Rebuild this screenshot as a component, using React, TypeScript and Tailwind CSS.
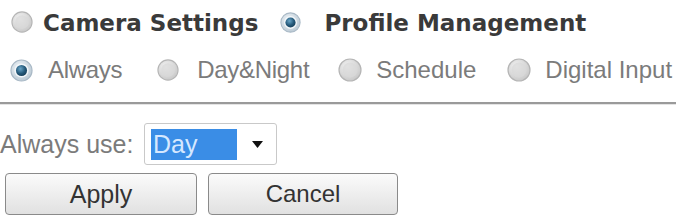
import React from "react";

function Radio({ checked, size = 22 }: { checked?: boolean; size?: number }) {
  const id = checked ? "rc" : "ru";
  return (
    <svg width={size} height={size} viewBox="0 0 24 24" className="shrink-0">
      <defs>
        <radialGradient id={id + "o"} cx="40%" cy="35%" r="70%">
          <stop offset="0%" stopColor={checked ? "#eef3f7" : "#f4f4f4"} />
          <stop offset="100%" stopColor={checked ? "#b9c8d3" : "#c6c6c6"} />
        </radialGradient>
        <radialGradient id={id + "i"} cx="40%" cy="35%" r="70%">
          <stop offset="0%" stopColor="#6aa6c8" />
          <stop offset="60%" stopColor="#24597a" />
          <stop offset="100%" stopColor="#163d57" />
        </radialGradient>
      </defs>
      <circle cx="12" cy="12" r="11" fill={`url(#${id}o)`} stroke={checked ? "#a9b9c6" : "#b5b5b5"} strokeWidth="1.2" />
      {checked ? (
        <>
          <circle cx="12" cy="12" r="7.4" fill="#f3f7fa" />
          <circle cx="12" cy="12" r="5.8" fill={`url(#${id}i)`} />
        </>
      ) : (
        <circle cx="12" cy="12" r="7.5" fill="#d9d9d9" opacity="0.7" />
      )}
    </svg>
  );
}

export default function App() {
  return (
    <div className="w-[676px] h-[217px] bg-white overflow-hidden font-['Liberation_Sans',Arial,sans-serif]">
      <div className="pt-[11px]">
        <div className="flex items-center h-[22px] pl-[11px]">
          <Radio />
          <span className="ml-[10px] font-['DejaVu_Sans',Verdana,sans-serif] font-bold text-[23px] leading-[22px] text-[#3a3a3a] pt-[2px]">
            Camera Settings
          </span>
          <span className="ml-[22px]">
            <Radio checked size={21} />
          </span>
          <span className="ml-[23px] font-['DejaVu_Sans',Verdana,sans-serif] font-bold text-[23px] leading-[22px] text-[#3a3a3a] pt-[2px]">
            Profile Management
          </span>
        </div>

        <div className="flex items-center h-[24px] mt-[25px] pl-[10px] text-[24px] leading-[24px] text-[#7b7b7b]">
          <Radio checked size={23} />
          <span className="ml-[15px] tracking-[-0.3px]">Always</span>
          <span className="ml-[35px]"><Radio size={22} /></span>
          <span className="ml-[18px] tracking-[-0.3px]">Day&amp;Night</span>
          <span className="ml-[29px]"><Radio size={24} /></span>
          <span className="ml-[14px]">Schedule</span>
          <span className="ml-[31px]"><Radio size={24} /></span>
          <span className="ml-[14px]">Digital Input</span>
        </div>

        <div className="mt-[20px] border-t-2 border-[#9a9a9a] border-b border-b-[#e4e4e4]" />

        <div className="flex items-center h-[42px] mt-[18px]">
          <span className="w-[132px] text-[25px] leading-[25px] text-[#7b7b7b] whitespace-nowrap">Always use:</span>
          <div className="ml-[12px] w-[133px] h-[42px] border border-[#c9c9c9] rounded-[3px] bg-white flex items-center pl-[6px]">
            <div className="w-[86px] h-[31px] bg-[#3a8de6] flex items-center pl-[2px]">
              <span className="text-[25px] leading-[25px] text-[#d6e8ff]">Day</span>
            </div>
            <svg width="11" height="7" viewBox="0 0 11 7" className="ml-[15px]">
              <polygon points="0,0 11,0 5.5,7" fill="#111" />
            </svg>
          </div>
        </div>

        <div className="flex items-center mt-[8px] pl-[5px] gap-[11px]">
          <button className="w-[192px] h-[42px] rounded-[4px] border border-[#8a8a8a] bg-gradient-to-b from-[#fbfbfb] to-[#e1e1e1] text-[25px] leading-[25px] text-[#333] font-['Liberation_Sans',Arial,sans-serif]">
            Apply
          </button>
          <button className="w-[190px] h-[42px] rounded-[4px] border border-[#8a8a8a] bg-gradient-to-b from-[#fbfbfb] to-[#e1e1e1] text-[24px] leading-[24px] text-[#333] font-['Liberation_Sans',Arial,sans-serif]">
            Cancel
          </button>
        </div>
      </div>
    </div>
  );
}
